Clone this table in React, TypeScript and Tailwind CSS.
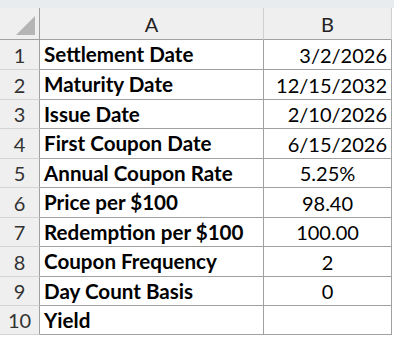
import { Fragment } from "react";

const rows: { label: string; value: string; align: "right" | "center" }[] = [
  { label: "Settlement Date", value: "3/2/2026", align: "right" },
  { label: "Maturity Date", value: "12/15/2032", align: "right" },
  { label: "Issue Date", value: "2/10/2026", align: "right" },
  { label: "First Coupon Date", value: "6/15/2026", align: "right" },
  { label: "Annual Coupon Rate", value: "5.25%", align: "center" },
  { label: "Price per $100", value: "98.40", align: "center" },
  { label: "Redemption per $100", value: "100.00", align: "center" },
  { label: "Coupon Frequency", value: "2", align: "center" },
  { label: "Day Count Basis", value: "0", align: "center" },
  { label: "Yield", value: "", align: "center" },
];

// heights incl. bottom border, so the grid lines land on the screenshot's pixels
const heights = ["h-[30px]", "h-[30px]", "h-[29px]", "h-[30px]", "h-[29px]", "h-[30px]", "h-[29px]", "h-[30px]", "h-[29px]", "h-[29px]"];

export default function App() {
  return (
    <div className="w-[394px] h-[337px] bg-white overflow-hidden font-['Lato','Open_Sans',sans-serif] text-black">
      <div className="h-[8px] bg-[#e8ecef]" />
      <div className="grid grid-cols-[40px_224px_128px]">
        {/* column header row */}
        <div className="h-[32px] bg-[#efefef] border-r border-b border-r-[#a0a0a0] border-b-[#a0a0a0] flex items-end justify-end pr-[4px] pb-[4px]">
          <svg width="19" height="19" viewBox="0 0 19 19">
            <polygon points="19,0 19,19 0,19" fill="#b5b5b5" />
          </svg>
        </div>
        <div className="h-[32px] bg-[#efefef] border-r border-b border-r-[#d0d0d0] border-b-[#a0a0a0] flex items-center justify-center text-[20px] text-[#222] pt-[1px]">
          A
        </div>
        <div className="h-[32px] bg-[#efefef] border-r border-b border-r-[#d0d0d0] border-b-[#a0a0a0] flex items-center justify-center text-[20px] text-[#222] pt-[1px]">
          B
        </div>

        {rows.map((r, i) => (
          <Fragment key={i}>
            <div
              className={`${heights[i]} bg-[#efefef] border-r border-b border-r-[#a0a0a0] border-b-[#d4d4d4] flex items-center justify-center text-[20px] text-[#333]`}
            >
              {i + 1}
            </div>
            <div className={`${heights[i]} border-r border-b border-[#a0a0a0] flex items-center pl-[4px] font-bold text-[20.6px]`}>
              {r.label}
            </div>
            <div
              className={`${heights[i]} border-r border-b border-[#a0a0a0] flex items-center text-[20px] ${
                r.align === "right" ? "justify-end pr-[4px]" : "justify-center"
              }`}
            >
              {r.value}
            </div>
          </Fragment>
        ))}
      </div>
    </div>
  );
}
